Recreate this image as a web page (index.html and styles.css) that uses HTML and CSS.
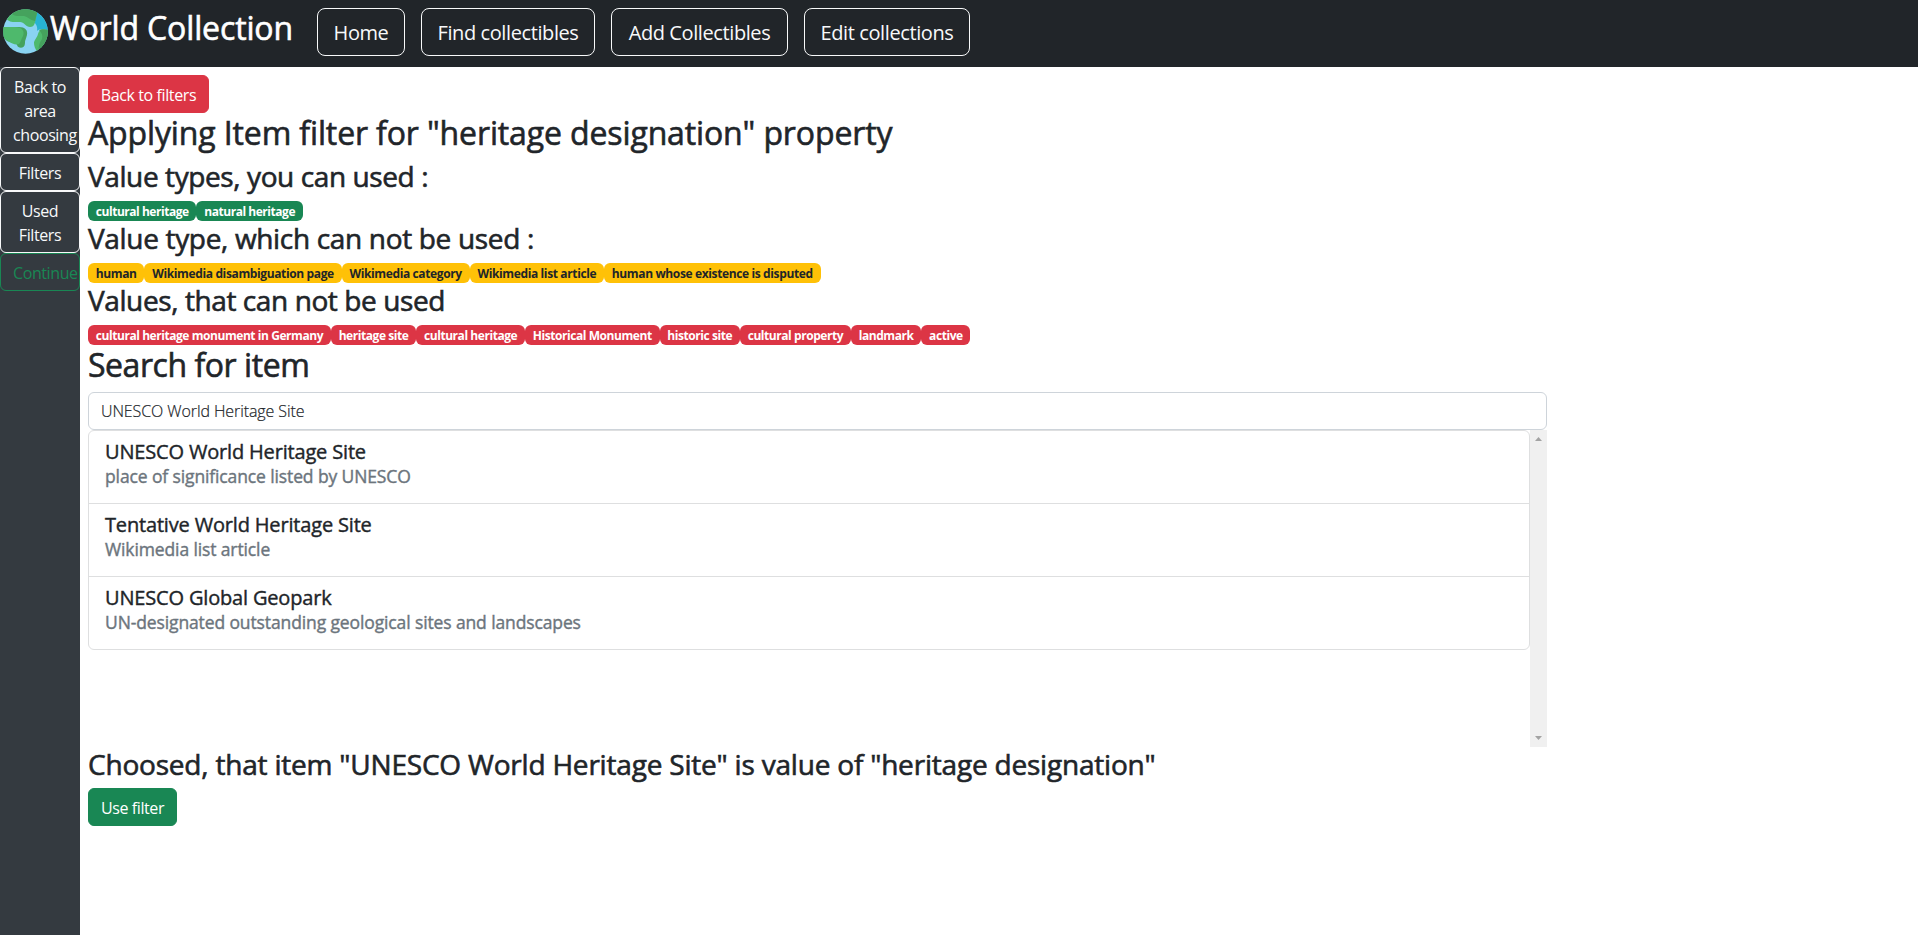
FILE: index.html
```html
<!DOCTYPE html>
<html lang="en">
<head>
<meta charset="utf-8">
<title>World Collection</title>
<link rel="stylesheet" href="styles.css">
</head>
<body>
<header class="topbar">
  <div class="brand">
    <svg class="globe" viewBox="0 0 45 45">
      <defs><clipPath id="disc"><circle cx="22.5" cy="22.5" r="22.3"/></clipPath></defs>
      <g clip-path="url(#disc)">
        <rect width="45" height="45" fill="#8ad3f2"/>
        <path d="M33 0 45 4V22C41 19 36 20 34 22 35 18 33 15 31 13Z" fill="#27b3d2"/>
        <path d="M3 9C6 14 12 13 17 13c4 0 6 5 10 5 5 0 5-5 6-9L35 0H8Z" fill="#4eb96c"/>
        <path d="M8 4C11 8 16 7 21 7c4 1 6 4 11 5L35 0H14Z" fill="#45a25d"/>
        <path d="M0 18h16c6 0 9 3 8 8-1 4-2 5-2 8 0 6-7 6-8 2-1-3-6-2-10-4L0 28Z" fill="#45a25d"/>
        <path d="M0 18h12c7 0 10 4 8 9-2 3-2 6-4 8-3 1-7 0-11-3L0 28Z" fill="#4eb96c"/>
        <path d="M45 21c-6-2-9 0-10 4-1 4-4 6-4 9 0 3 1 5 3 9l11-7Z" fill="#4eb96c"/>
        <path d="M45 21c-4-1-7-1-9 0 3 3 4 6 3 9-2 3-4 7-3 12l9-7Z" fill="#45a25d"/>
      </g>
    </svg>
    <h2 class="brand-name">World Collection</h2>
  </div>
  <nav class="nav">
    <a class="nav-btn home">Home</a>
    <a class="nav-btn find">Find collectibles</a>
    <a class="nav-btn add">Add Collectibles</a>
    <a class="nav-btn edit">Edit collections</a>
  </nav>
</header>
<div class="layout">
  <aside class="sidebar">
    <a class="btn side">Back to area choosing</a>
    <a class="btn side">Filters</a>
    <a class="btn side">Used Filters</a>
    <a class="btn side continue">Continue</a>
  </aside>
  <main class="content">
    <a class="btn danger">Back to filters</a>
    <h2 class="page-title">Applying Item filter for "heritage designation" property</h2>
    <h3>Value types, you can used :</h3>
    <div class="badges green"><span>cultural heritage</span><span>natural heritage</span></div>
    <h3 class="types-title">Value type, which can not be used :</h3>
    <div class="badges yellow"><span>human</span><span>Wikimedia disambiguation page</span><span>Wikimedia category</span><span>Wikimedia list article</span><span>human whose existence is disputed</span></div>
    <h3>Values, that can not be used</h3>
    <div class="badges red"><span>cultural heritage monument in Germany</span><span>heritage site</span><span>cultural heritage</span><span>Historical Monument</span><span>historic site</span><span>cultural property</span><span>landmark</span><span>active</span></div>
    <h2>Search for item</h2>
    <div class="search">
      <input class="field" type="text" value="UNESCO World Heritage Site">
      <div class="results">
        <ul class="list">
          <li><h5>UNESCO World Heritage Site</h5><p>place of significance listed by UNESCO</p></li>
          <li><h5>Tentative World Heritage Site</h5><p>Wikimedia list article</p></li>
          <li><h5>UNESCO Global Geopark</h5><p>UN-designated outstanding geological sites and landscapes</p></li>
        </ul>
        <div class="scrollbar">
          <svg width="17" height="17" viewBox="0 0 17 17"><path d="M5 11 8.5 7 12 11Z" fill="#a3a3a3"/></svg>
          <svg width="17" height="17" viewBox="0 0 17 17"><path d="M5 6 8.5 10 12 6Z" fill="#a3a3a3"/></svg>
        </div>
      </div>
    </div>
    <h3 class="choice-title">Choosed, that item "UNESCO World Heritage Site" is value of "heritage designation"</h3>
    <a class="btn success">Use filter</a>
  </main>
</div>
</body>
</html>
```
FILE: styles.css
```css
* { box-sizing: border-box; }
body {
  margin: 0;
  height: 935px;
  display: flex;
  flex-direction: column;
  overflow: hidden;
  font: 400 16px/24px "Open Sans", "Noto Sans", sans-serif;
  letter-spacing: -0.4px;
  color: #212529;
  background: #fff;
}
h2, h3, h5, p, ul { margin: 0; padding: 0; }
h2, h3 {
  padding-top: 1px;
  margin-bottom: 7px;
  font-weight: 500;
  white-space: nowrap;
  -webkit-text-stroke: 0.6px currentColor;
}
h2 { font-size: 32px; line-height: 38.4px; letter-spacing: -0.45px; }
h3 { font-size: 28px; line-height: 33.6px; }
.page-title { letter-spacing: -0.13px; }
.types-title { letter-spacing: -0.33px; }
.choice-title { letter-spacing: -0.2px; }

.topbar { flex: none; height: 67px; background: #212529; color: #fff; display: flex; }
.brand { width: 317px; display: flex; padding: 8px 0 0 2px; }
.globe { width: 45px; height: 45px; margin: 1px 0 0 1px; flex: none; }
.brand-name { margin-left: 2px; letter-spacing: -0.13px; }
.nav { display: flex; gap: 16px; padding-top: 8px; }
.nav-btn {
  height: 48px;
  border: 1px solid #f8f9fa;
  border-radius: 8px;
  font-size: 20px;
  line-height: 48px;
  text-align: center;
  white-space: nowrap;
  color: #f8f9fa;
}
.home { width: 88px; }
.find { width: 174px; }
.add { width: 177px; }
.edit { width: 166px; }

.layout { flex: 1; display: flex; }
.sidebar { width: 80px; flex: none; background: #343a40; display: flex; flex-direction: column; }
.content { flex: 1; padding: 8px; display: flex; flex-direction: column; align-items: flex-start; }
.btn {
  padding: 7px 12px 5px;
  border: 1px solid;
  border-radius: 6px;
  color: #fff;
  text-align: center;
}
.side { color: #f8f9fa; }
.continue { color: #198754; }
.danger { width: 121px; padding: 7px 0 5px; background: #dc3545; border-color: #dc3545; }
.success { width: 89px; padding: 7px 0 5px; background: #198754; border-color: #198754; }

.badges { display: flex; }
.badges span {
  height: 20.4px;
  padding: 5px 7.8px 3.4px;
  border-radius: 6px;
  font-size: 12px;
  line-height: 12px;
  font-weight: 700;
  white-space: nowrap;
}
.green span { background: #198754; color: #fff; letter-spacing: -0.46px; }
.yellow span { background: #ffc107; color: #212529; letter-spacing: -0.37px; }
.red span { background: #dc3545; color: #fff; letter-spacing: -0.44px; }

.search { width: 1459px; }
.field {
  display: block;
  width: 100%;
  height: 38px;
  padding: 6px 12px;
  border: 1px solid #ced4da;
  border-radius: 6px;
  font: inherit;
  font-weight: 300;
  letter-spacing: -0.09px;
  color: #212529;
  -webkit-text-stroke: 0.2px currentColor;
  outline: 0;
}
.results { height: 316.8px; display: flex; align-items: flex-start; }
.list { flex: 1; list-style: none; border: 1px solid #dedfe0; border-radius: 6px; }
.list li { height: 73px; padding: 9px 16px 7px; border-bottom: 1px solid #dedfe0; }
.list li:last-child { height: 72px; border-bottom: 0; }
.list h5, .list p { line-height: 24px; font-weight: 500; -webkit-text-stroke: 0.4px currentColor; }
.list h5 { font-size: 20px; letter-spacing: -0.17px; }
.list p { font-size: 17.5px; letter-spacing: -0.12px; color: #6c757d; }
.scrollbar {
  width: 17px;
  height: 100%;
  background: #f0f0f0;
  display: flex;
  flex-direction: column;
  justify-content: space-between;
}
```
